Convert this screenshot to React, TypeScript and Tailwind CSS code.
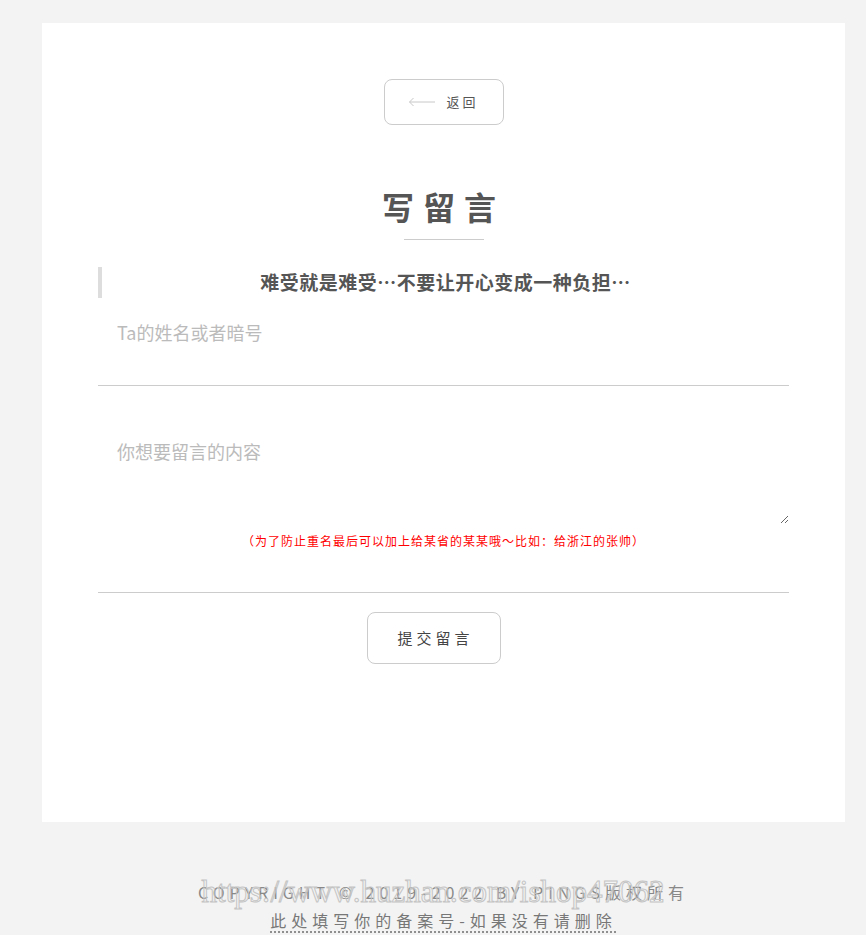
const cjk = { fontFamily: '"Noto Sans CJK SC", "Noto Sans", sans-serif' };

function BackArrow() {
  return (
    <svg width="28" height="10" viewBox="0 0 28 10" fill="none" className="shrink-0">
      <path d="M27 5H1.5M5.5 1L1.5 5l4 4" stroke="#c8c8c8" strokeWidth="1" />
    </svg>
  );
}

export default function App() {
  return (
    <div className="relative min-h-[935px] bg-[#f3f3f3] pt-[23px]" style={cjk}>
      <div className="ml-[42px] h-[799px] w-[803px] bg-white px-[56px] pt-[56px]">
        <div className="flex justify-center">
          <button
            type="button"
            className="flex h-[46px] w-[120px] items-center justify-center gap-[10px] rounded-[8px] border border-[#cccccc] text-[13px] tracking-[3px] text-[#555]"
          >
            <BackArrow />
            <span>返回</span>
          </button>
        </div>

        <h1 className="mt-[61px] text-center text-[32px] font-bold leading-[40px] tracking-[9px] text-[#555]">
          写留言
        </h1>
        <div className="mx-auto mt-[13px] h-px w-[80px] bg-[#cccccc]" />

        <blockquote className="mt-[27px] flex h-[31px] items-center justify-center border-l-4 border-[#dddddd]">
          <p className="text-[19px] font-bold tracking-[0.5px] text-[#555]">难受就是难受…不要让开心变成一种负担…</p>
        </blockquote>

        <div className="border-b border-[#cccccc] pb-[29px]">
          <input
            type="text"
            placeholder="Ta的姓名或者暗号"
            className="mt-[10px] h-[48px] w-full bg-transparent px-[19px] text-[18px] text-[#555] outline-none placeholder:text-[#bbbbbb]"
          />
        </div>

        <div className="border-b border-[#cccccc] pb-[42px] pt-[39px]">
          <textarea
            placeholder="你想要留言的内容"
            className="block h-[99px] w-full bg-transparent px-[19px] pt-[14px] text-[18px] leading-[24px] text-[#555] outline-none placeholder:text-[#bbbbbb]"
          />
          <p className="mt-[8px] text-center text-[12px] leading-[18px] tracking-[1px] text-[#ff0000]">
            （为了防止重名最后可以加上给某省的某某哦～比如：给浙江的张帅）
          </p>
        </div>

        <div className="mt-[19px] flex justify-center pr-[20px]">
          <button
            type="button"
            className="h-[52px] w-[134px] rounded-[8px] border border-[#cccccc] pl-[4px] text-[15px] tracking-[4px] text-[#444]"
          >
            提交留言
          </button>
        </div>
      </div>

      <footer className="relative mt-[58px] text-[#888]">
        <div className="ml-[42px] w-[803px] text-center">
          <p className="text-[16px] leading-[24px] tracking-[5px]">COPYRIGHT © 2019-2022 BY PINGS版权所有</p>
          <p className="mt-[5px] text-[16px] leading-[22px] tracking-[5px]">
            <a className="text-[#777] underline decoration-dotted underline-offset-[5px]">
              此处填写你的备案号-如果没有请删除
            </a>
          </p>
        </div>
        <div
          className="pointer-events-none absolute left-0 right-0 top-[-4px] text-center text-[31px] leading-[32px] text-transparent [-webkit-text-stroke:1px_#c4c4c4]"
          style={{ fontFamily: '"Liberation Serif", serif' }}
        >
          https://www.huzhan.com/ishop47062
        </div>
      </footer>
    </div>
  );
}
